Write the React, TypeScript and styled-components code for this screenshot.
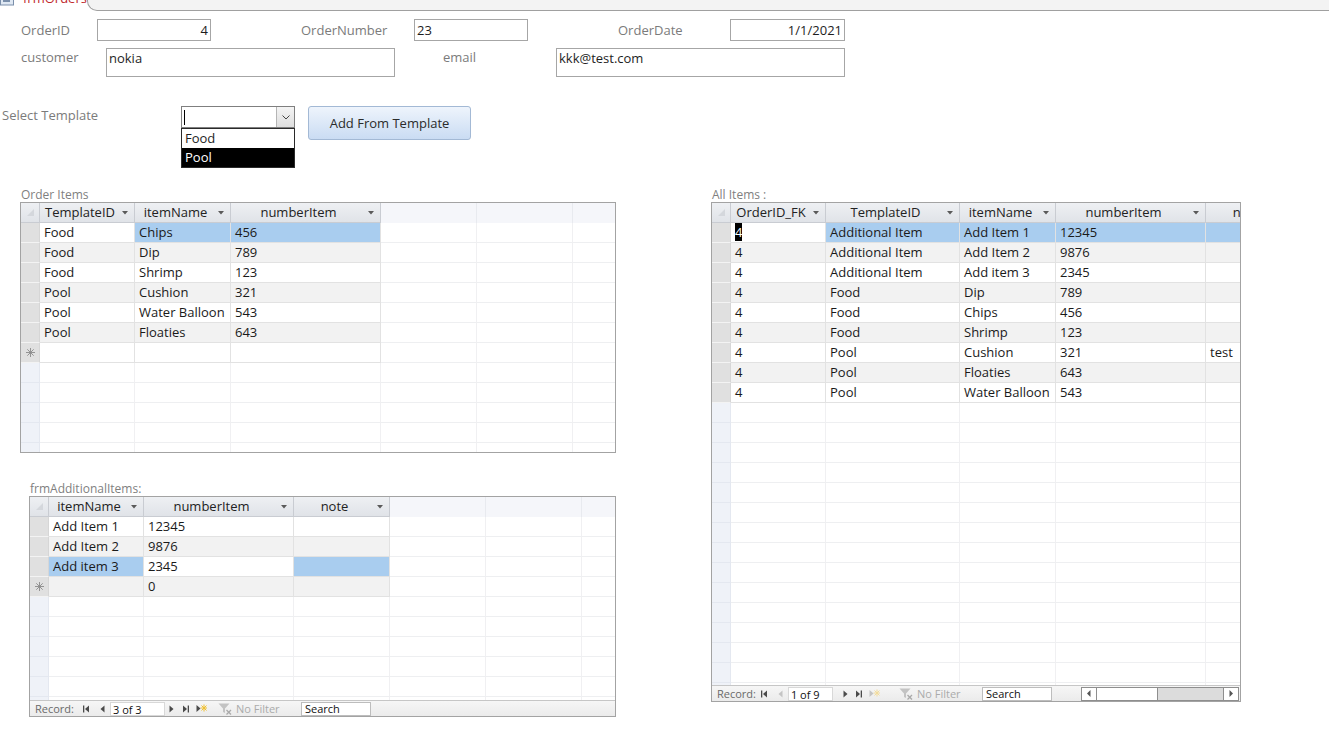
import React from "react";
import styled, { createGlobalStyle } from "styled-components";

const GlobalStyle = createGlobalStyle`
  html, body {
    margin: 0;
    padding: 0;
    background: #ffffff;
  }
  body {
    font-family: "Open Sans", "Noto Sans", "Liberation Sans", sans-serif;
    font-size: 13px;
    color: #1e1e1e;
  }
  * {
    box-sizing: border-box;
  }
`;

const Page = styled.div`
  width: 1329px;
  height: 754px;
  overflow: hidden;
  background: #fff;
`;

/* ---------- document tab ---------- */

const TabStrip = styled.div`
  display: flex;
  height: 11px;
  overflow: hidden;
  background: #fff;
`;

const Tab = styled.div`
  flex: 0 0 80px;
  display: flex;
  align-items: flex-start;
  gap: 9px;
  background: #fff;
`;

const TabTitle = styled.span`
  margin-top: -8px;
  color: #c0282d;
  font-size: 13px;
  line-height: 13px;
  white-space: nowrap;
`;

const TabCurve = styled.div`
  flex: 0 0 10px;
  height: 11px;
  background: #f3f3f3;
  border-left: 1px solid #a0a0a0;
  border-bottom: 1px solid #a0a0a0;
  border-bottom-left-radius: 10px;
`;

const TabRest = styled.div`
  flex: 1;
  background: #f3f3f3;
  border-bottom: 1px solid #a0a0a0;
`;

/* ---------- form fields ---------- */

const FieldRow = styled.div<{ $top: number; $left: number; $align?: string }>`
  display: flex;
  align-items: ${(p) => p.$align || "flex-start"};
  margin-top: ${(p) => p.$top}px;
  padding-left: ${(p) => p.$left}px;
`;

const FieldLabel = styled.div<{ $w: number; $gap?: number; $lh?: number }>`
  flex: 0 0 ${(p) => p.$w}px;
  margin-left: ${(p) => p.$gap || 0}px;
  color: #7b7b7b;
  font-size: 13px;
  line-height: ${(p) => p.$lh || 20}px;
  white-space: nowrap;
`;

const TextBox = styled.div<{ $w: number; $h: number; $right?: boolean }>`
  flex: 0 0 ${(p) => p.$w}px;
  height: ${(p) => p.$h}px;
  border: 1px solid #a6a6a6;
  background: #fff;
  padding: 0 2px;
  text-align: ${(p) => (p.$right ? "right" : "left")};
  line-height: ${(p) => (p.$h > 24 ? 18 : 20)}px;
  color: #1e1e1e;
  white-space: nowrap;
`;

const Combo = styled.div`
  position: relative;
  flex: 0 0 114px;
  height: 22px;
  display: flex;
  border: 1px solid #7f7f7f;
  background: #fff;
`;

const ComboText = styled.div`
  flex: 1;
  display: flex;
  align-items: center;
  padding-left: 2px;
`;

const Caret = styled.span`
  width: 1px;
  height: 15px;
  background: #000;
`;

const ComboButton = styled.div`
  flex: 0 0 18px;
  display: flex;
  align-items: center;
  justify-content: center;
  border-left: 1px solid #b5b5b5;
  background: linear-gradient(#f4f4f4, #dedede);
`;

const ComboList = styled.ul`
  position: absolute;
  top: 21px;
  left: -1px;
  width: 114px;
  margin: 0;
  padding: 0;
  list-style: none;
  border: 1px solid #2a2a2a;
  background: #fff;
  z-index: 2;
`;

const ComboOption = styled.li<{ $active?: boolean }>`
  height: 19px;
  line-height: 19px;
  padding-left: 3px;
  background: ${(p) => (p.$active ? "#000" : "#fff")};
  color: ${(p) => (p.$active ? "#fff" : "#1e1e1e")};
`;

const ActionButton = styled.button`
  margin-left: 13px;
  width: 163px;
  height: 34px;
  border: 1px solid #a3b9d5;
  border-radius: 3px;
  background: linear-gradient(#eef4fc, #cadcf3);
  font-family: inherit;
  font-size: 13px;
  color: #2b2b2b;
  padding: 0;
`;

/* ---------- sub-form panels ---------- */

const Panels = styled.div`
  display: flex;
  align-items: flex-start;
  margin-top: 47px;
`;

const LeftColumn = styled.div`
  display: flex;
  flex-direction: column;
  width: 616px;
`;

const Section = styled.section<{ $indent: number; $top?: number }>`
  margin-left: ${(p) => p.$indent}px;
  margin-top: ${(p) => p.$top || 0}px;
`;

const SectionTitle = styled.div`
  height: 15px;
  line-height: 15px;
  padding-left: 1px;
  font-size: 12px;
  color: #7f7f7f;
  white-space: nowrap;
`;

const Sheet = styled.div<{ $w: number; $h: number }>`
  width: ${(p) => p.$w}px;
  height: ${(p) => p.$h}px;
  border: 1px solid #a3a3a3;
  display: flex;
  flex-direction: column;
  overflow: hidden;
  background: #fff;
`;

const HeadRow = styled.div`
  display: flex;
  flex: 0 0 20px;
  overflow: hidden;
`;

const Corner = styled.div`
  flex: 0 0 19px;
  display: flex;
  align-items: center;
  justify-content: center;
  background: linear-gradient(#eef0f3, #e0e3e8);
  border-right: 1px solid #c9ccd2;
  border-bottom: 1px solid #c9ccd2;
`;

const HeadCell = styled.div<{ $w: number }>`
  position: relative;
  flex: 0 0 ${(p) => p.$w}px;
  height: 20px;
  padding: 0 18px 0 4px;
  background: linear-gradient(#eef0f3, #e0e3e8);
  border-right: 1px solid #c9ccd2;
  border-bottom: 1px solid #c9ccd2;
  line-height: 19px;
  text-align: center;
  white-space: nowrap;
  color: #222;
`;

const HeadArrow = styled.span`
  position: absolute;
  right: 6px;
  top: 8px;
  display: flex;
`;

const HeadFill = styled.div`
  flex: 0 0 96px;
  height: 20px;
  background: #f5f6fa;
  border-right: 1px solid #e8eaef;
`;

const Body = styled.div`
  flex: 1;
  overflow: hidden;
`;

const GridRow = styled.div`
  display: flex;
  height: 20px;
  overflow: hidden;
`;

const Selector = styled.div<{ $kind: "data" | "empty" }>`
  flex: 0 0 19px;
  display: flex;
  align-items: center;
  justify-content: center;
  background: ${(p) => (p.$kind === "empty" ? "#eff2f8" : "#e0e0e0")};
  border-bottom: 1px solid ${(p) => (p.$kind === "empty" ? "#e4e8f0" : "#f3f3f3")};
  border-right: 1px solid ${(p) => (p.$kind === "empty" ? "#e4e8f0" : "#d6d6d6")};
`;

const Cell = styled.div<{ $w: number; $tone: "white" | "alt" | "sel" }>`
  flex: 0 0 ${(p) => p.$w}px;
  height: 20px;
  padding: 0 4px;
  line-height: 19px;
  white-space: nowrap;
  overflow: hidden;
  color: #1a1a1a;
  background: ${(p) => (p.$tone === "sel" ? "#a9cdef" : p.$tone === "alt" ? "#f2f2f2" : "#fff")};
  border-right: 1px solid #e2e2e2;
  border-bottom: 1px solid #e2e2e2;
`;

const EmptyCell = styled.div<{ $w: number }>`
  flex: 0 0 ${(p) => p.$w}px;
  height: 20px;
  background: #fff;
  border-right: 1px solid #f0f0f2;
  border-bottom: 1px solid #eeeff1;
`;

const Highlight = styled.span`
  background: #000;
  color: #fff;
`;

/* ---------- record navigation ---------- */

const NavBar = styled.div`
  flex: 0 0 16px;
  display: flex;
  align-items: center;
  border-top: 1px solid #c6c6c6;
  background: linear-gradient(#f6f6f6, #ebebeb);
  font-size: 11px;
  color: #6a6a6a;
  overflow: hidden;
`;

const NavLabel = styled.span<{ $w: number }>`
  flex: 0 0 ${(p) => p.$w}px;
  padding-left: 5px;
  white-space: nowrap;
`;

const NavSlot = styled.span<{ $w: number }>`
  flex: 0 0 ${(p) => p.$w}px;
  display: flex;
  align-items: center;
  justify-content: center;
`;

const RecordBox = styled.div<{ $w: number; $after: number }>`
  flex: 0 0 ${(p) => p.$w}px;
  margin-right: ${(p) => p.$after}px;
  height: 14px;
  padding-left: 2px;
  line-height: 13px;
  background: #fff;
  border: 1px solid #d8d8d8;
  color: #111;
`;

const FilterGroup = styled.span<{ $gap: number }>`
  flex: 0 0 74px;
  margin-left: ${(p) => p.$gap}px;
  display: flex;
  align-items: center;
  gap: 4px;
  color: #ababab;
  white-space: nowrap;
`;

const SearchBox = styled.div`
  flex: 0 0 70px;
  margin-left: 9px;
  height: 14px;
  padding-left: 3px;
  line-height: 12px;
  background: #fff;
  border: 1px solid #bdbdbd;
  color: #111;
`;

const HScroll = styled.div`
  flex: 0 0 158px;
  margin-left: auto;
  margin-right: 1px;
  height: 14px;
  display: flex;
  border: 1px solid #8e8e8e;
  background: #dcdcdc;
`;

const ScrollButton = styled.div`
  flex: 0 0 14px;
  display: flex;
  align-items: center;
  justify-content: center;
  background: #fff;
`;

const ScrollThumb = styled.div`
  flex: 0 0 62px;
  background: #fff;
  border: 1px solid #8e8e8e;
  border-top: none;
  border-bottom: none;
`;

const ScrollTrack = styled.div`
  flex: 1;
  border-right: 1px solid #8e8e8e;
`;

/* ---------- icons ---------- */

const DropTriangle = () => (
  <svg width="6" height="4" viewBox="0 0 6 4">
    <polygon points="0,0 6,0 3,3.5" fill="#5a5a5a" />
  </svg>
);

const Chevron = () => (
  <svg width="8" height="5" viewBox="0 0 8 5">
    <polyline points="0.5,0.5 4,4 7.5,0.5" fill="none" stroke="#444" strokeWidth="1" />
  </svg>
);

const CornerMark = () => (
  <svg width="9" height="9" viewBox="0 0 9 9">
    <polygon points="8,1 8,8 1,8" fill="#d4d7dc" />
  </svg>
);

const NewRowMark = () => (
  <svg width="9" height="9" viewBox="0 0 9 9" stroke="#8a8a8a" strokeWidth="0.9">
    <line x1="4.5" y1="0" x2="4.5" y2="9" />
    <line x1="0" y1="4.5" x2="9" y2="4.5" />
    <line x1="1.3" y1="1.3" x2="7.7" y2="7.7" />
    <line x1="7.7" y1="1.3" x2="1.3" y2="7.7" />
  </svg>
);

const FormIcon = () => (
  <svg width="14" height="11" viewBox="0 0 14 11">
    <rect x="0.5" y="-4" width="13" height="9" fill="#dfe8f3" stroke="#7a8fab" />
    <rect x="3" y="0" width="7" height="2" fill="#7a8fab" />
  </svg>
);

const FirstIcon: React.FC<{ c: string }> = ({ c }) => (
  <svg width="7" height="8" viewBox="0 0 7 8">
    <rect x="0" y="0.5" width="1.3" height="7" fill={c} />
    <polygon points="6,0.5 6,7.5 2,4" fill={c} />
  </svg>
);

const PrevIcon: React.FC<{ c: string }> = ({ c }) => (
  <svg width="5" height="8" viewBox="0 0 5 8">
    <polygon points="4.5,0.5 4.5,7.5 0.5,4" fill={c} />
  </svg>
);

const NextIcon: React.FC<{ c: string }> = ({ c }) => (
  <svg width="5" height="8" viewBox="0 0 5 8">
    <polygon points="0.5,0.5 0.5,7.5 4.5,4" fill={c} />
  </svg>
);

const LastIcon: React.FC<{ c: string }> = ({ c }) => (
  <svg width="7" height="8" viewBox="0 0 7 8">
    <polygon points="1,0.5 1,7.5 5,4" fill={c} />
    <rect x="5.7" y="0.5" width="1.3" height="7" fill={c} />
  </svg>
);

const NewIcon: React.FC<{ c: string; star: string }> = ({ c, star }) => (
  <svg width="11" height="9" viewBox="0 0 11 9">
    <polygon points="0.5,1 0.5,8 4.5,4.5" fill={c} />
    <g stroke={star} strokeWidth="1">
      <line x1="8" y1="0.5" x2="8" y2="7.5" />
      <line x1="4.5" y1="4" x2="11" y2="4" />
      <line x1="5.5" y1="1.5" x2="10.5" y2="6.5" />
      <line x1="10.5" y1="1.5" x2="5.5" y2="6.5" />
    </g>
  </svg>
);

const FilterIcon = () => (
  <svg width="14" height="12" viewBox="0 0 14 12">
    <polygon points="0.5,0.5 11.5,0.5 7,5.5 7,10 5,9 5,5.5" fill="#c3c3c3" />
    <g stroke="#a9a9a9" strokeWidth="1.2">
      <line x1="8.5" y1="7" x2="13" y2="11.5" />
      <line x1="13" y1="7" x2="8.5" y2="11.5" />
    </g>
  </svg>
);

const ScrollArrow: React.FC<{ dir: "left" | "right" }> = ({ dir }) => (
  <svg width="4" height="7" viewBox="0 0 4 7">
    <polygon points={dir === "left" ? "3.5,0 3.5,7 0,3.5" : "0.5,0 0.5,7 4,3.5"} fill="#555" />
  </svg>
);

/* ---------- datasheet ---------- */

type Column = { name: string; width: number };
type Rec = { cells: string[]; sel?: number[]; caret?: number };
type Nav = {
  text: string;
  labelW: number;
  boxW: number;
  afterBox: number;
  filterGap: number;
  prevOn: boolean;
  scroll?: boolean;
};

const FILL = [96, 96, 96, 96, 96, 96, 96];
const ON = "#4a4a4a";
const OFF = "#c4c4c4";

const RecordNav: React.FC<{ nav: Nav }> = ({ nav }) => (
  <NavBar>
    <NavLabel $w={nav.labelW}>Record:</NavLabel>
    <NavSlot $w={17}>
      <FirstIcon c={ON} />
    </NavSlot>
    <NavSlot $w={15}>
      <PrevIcon c={nav.prevOn ? ON : OFF} />
    </NavSlot>
    <RecordBox $w={nav.boxW} $after={nav.afterBox}>
      {nav.text}
    </RecordBox>
    <NavSlot $w={13}>
      <NextIcon c={ON} />
    </NavSlot>
    <NavSlot $w={14}>
      <LastIcon c={ON} />
    </NavSlot>
    <NavSlot $w={18}>
      <NewIcon c={nav.prevOn ? ON : OFF} star={nav.prevOn ? "#f0c030" : "#f3dc9a"} />
    </NavSlot>
    <FilterGroup $gap={nav.filterGap}>
      <FilterIcon />
      No Filter
    </FilterGroup>
    <SearchBox>Search</SearchBox>
    {nav.scroll ? (
      <HScroll>
        <ScrollButton>
          <ScrollArrow dir="left" />
        </ScrollButton>
        <ScrollThumb />
        <ScrollTrack />
        <ScrollButton>
          <ScrollArrow dir="right" />
        </ScrollButton>
      </HScroll>
    ) : null}
  </NavBar>
);

const Datasheet: React.FC<{
  width: number;
  height: number;
  columns: Column[];
  records: Rec[];
  blank?: string[];
  nav?: Nav;
}> = ({ width, height, columns, records, blank, nav }) => {
  const used = records.length + (blank ? 1 : 0);
  const emptyRows = Math.max(0, Math.ceil(height / 20) - used);
  return (
    <Sheet $w={width} $h={height}>
      <HeadRow>
        <Corner>
          <CornerMark />
        </Corner>
        {columns.map((c) => (
          <HeadCell key={c.name} $w={c.width}>
            {c.name}
            <HeadArrow>
              <DropTriangle />
            </HeadArrow>
          </HeadCell>
        ))}
        {FILL.map((w, k) => (
          <HeadFill key={k} />
        ))}
      </HeadRow>
      <Body>
        {records.map((r, i) => (
          <GridRow key={i}>
            <Selector $kind="data" />
            {columns.map((c, j) => (
              <Cell
                key={c.name}
                $w={c.width}
                $tone={r.sel && r.sel.includes(j) ? "sel" : i % 2 === 1 ? "alt" : "white"}
              >
                {r.caret === j ? <Highlight>{r.cells[j]}</Highlight> : r.cells[j]}
              </Cell>
            ))}
            {FILL.map((w, k) => (
              <EmptyCell key={k} $w={w} />
            ))}
          </GridRow>
        ))}
        {blank ? (
          <GridRow>
            <Selector $kind="data">
              <NewRowMark />
            </Selector>
            {columns.map((c, j) => (
              <Cell key={c.name} $w={c.width} $tone={records.length % 2 === 1 ? "alt" : "white"}>
                {blank[j]}
              </Cell>
            ))}
            {FILL.map((w, k) => (
              <EmptyCell key={k} $w={w} />
            ))}
          </GridRow>
        ) : null}
        {Array.from({ length: emptyRows }).map((_, i) => (
          <GridRow key={"e" + i}>
            <Selector $kind="empty" />
            {columns.map((c) => (
              <EmptyCell key={c.name} $w={c.width} />
            ))}
            {FILL.map((w, k) => (
              <EmptyCell key={k} $w={w} />
            ))}
          </GridRow>
        ))}
      </Body>
      {nav ? <RecordNav nav={nav} /> : null}
    </Sheet>
  );
};

/* ---------- data ---------- */

const orderColumns: Column[] = [
  { name: "TemplateID", width: 95 },
  { name: "itemName", width: 96 },
  { name: "numberItem", width: 150 },
];

const orderRecords: Rec[] = [
  { cells: ["Food", "Chips", "456"], sel: [1, 2] },
  { cells: ["Food", "Dip", "789"] },
  { cells: ["Food", "Shrimp", "123"] },
  { cells: ["Pool", "Cushion", "321"] },
  { cells: ["Pool", "Water Balloon", "543"] },
  { cells: ["Pool", "Floaties", "643"] },
];

const allColumns: Column[] = [
  { name: "OrderID_FK", width: 95 },
  { name: "TemplateID", width: 134 },
  { name: "itemName", width: 96 },
  { name: "numberItem", width: 150 },
  { name: "note", width: 96 },
];

const allRecords: Rec[] = [
  { cells: ["4", "Additional Item", "Add Item 1", "12345", ""], sel: [1, 2, 3, 4], caret: 0 },
  { cells: ["4", "Additional Item", "Add Item 2", "9876", ""] },
  { cells: ["4", "Additional Item", "Add item 3", "2345", ""] },
  { cells: ["4", "Food", "Dip", "789", ""] },
  { cells: ["4", "Food", "Chips", "456", ""] },
  { cells: ["4", "Food", "Shrimp", "123", ""] },
  { cells: ["4", "Pool", "Cushion", "321", "test"] },
  { cells: ["4", "Pool", "Floaties", "643", ""] },
  { cells: ["4", "Pool", "Water Balloon", "543", ""] },
];

const extraColumns: Column[] = [
  { name: "itemName", width: 95 },
  { name: "numberItem", width: 150 },
  { name: "note", width: 96 },
];

const extraRecords: Rec[] = [
  { cells: ["Add Item 1", "12345", ""] },
  { cells: ["Add Item 2", "9876", ""] },
  { cells: ["Add item 3", "2345", ""], sel: [0, 2] },
];

export default function App() {
  return (
    <Page>
      <GlobalStyle />
      <TabStrip>
        <Tab>
          <FormIcon />
          <TabTitle>frmOrders</TabTitle>
        </Tab>
        <TabCurve />
        <TabRest />
      </TabStrip>

      <FieldRow $top={8} $left={21} $align="center">
        <FieldLabel $w={76} $lh={22}>OrderID</FieldLabel>
        <TextBox $w={114} $h={22} $right>
          4
        </TextBox>
        <FieldLabel $w={113} $gap={90} $lh={22}>
          OrderNumber
        </FieldLabel>
        <TextBox $w={114} $h={22}>
          23
        </TextBox>
        <FieldLabel $w={112} $gap={90} $lh={22}>
          OrderDate
        </FieldLabel>
        <TextBox $w={115} $h={22} $right>
          1/1/2021
        </TextBox>
      </FieldRow>

      <FieldRow $top={7} $left={21}>
        <FieldLabel $w={85} $lh={18}>customer</FieldLabel>
        <TextBox $w={289} $h={29}>nokia</TextBox>
        <FieldLabel $w={113} $gap={48} $lh={18}>
          email
        </FieldLabel>
        <TextBox $w={289} $h={29}>kkk@test.com</TextBox>
      </FieldRow>

      <FieldRow $top={29} $left={2}>
        <FieldLabel $w={179} $lh={18}>
          Select Template
        </FieldLabel>
        <Combo>
          <ComboText>
            <Caret />
          </ComboText>
          <ComboButton>
            <Chevron />
          </ComboButton>
          <ComboList>
            <ComboOption>Food</ComboOption>
            <ComboOption $active>Pool</ComboOption>
          </ComboList>
        </Combo>
        <ActionButton>Add From Template</ActionButton>
      </FieldRow>

      <Panels>
        <LeftColumn>
          <Section $indent={20}>
            <SectionTitle>Order Items</SectionTitle>
            <Datasheet
              width={596}
              height={251}
              columns={orderColumns}
              records={orderRecords}
              blank={["", "", ""]}
            />
          </Section>
          <Section $indent={29} $top={28}>
            <SectionTitle>frmAdditionalItems:</SectionTitle>
            <Datasheet
              width={587}
              height={221}
              columns={extraColumns}
              records={extraRecords}
              blank={["", "0", ""]}
              nav={{ text: "3 of 3", labelW: 48, boxW: 55, afterBox: 0, filterGap: 8, prevOn: true }}
            />
          </Section>
        </LeftColumn>
        <Section $indent={95}>
          <SectionTitle>All Items :</SectionTitle>
          <Datasheet
            width={530}
            height={500}
            columns={allColumns}
            records={allRecords}
            nav={{ text: "1 of 9", labelW: 43, boxW: 45, afterBox: 6, filterGap: 15, prevOn: false, scroll: true }}
          />
        </Section>
      </Panels>
    </Page>
  );
}
